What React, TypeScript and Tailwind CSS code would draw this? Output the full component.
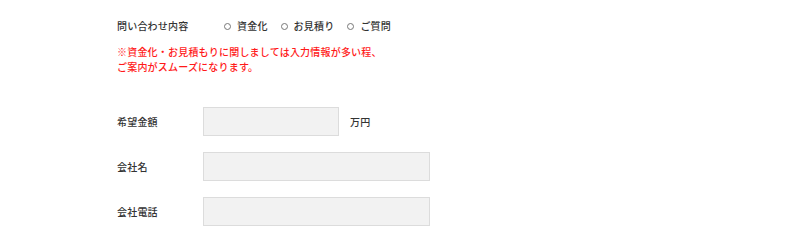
const font = { fontFamily: '"Noto Sans CJK JP", "Noto Sans", sans-serif' }

const inquiryTypes = ['資金化', 'お見積り', 'ご質問']

function Radio({ label }: { label: string }) {
  return (
    <label className="flex items-center gap-[6px]">
      <span className="block h-[7px] w-[7px] rounded-full border border-[#777] bg-white" />
      <span>{label}</span>
    </label>
  )
}

function Field({ label, width, suffix }: { label: string; width: string; suffix?: string }) {
  return (
    <div className="flex items-center">
      <div className="w-[86px]">{label}</div>
      <div className={`h-[29px] border border-[#dcdcdc] bg-[#f2f2f2] ${width}`} />
      {suffix && <span className="ml-[11px]">{suffix}</span>}
    </div>
  )
}

export default function App() {
  return (
    <div
      className="h-[243px] w-[800px] bg-white pl-[117px] text-[10px] font-medium tracking-[0.02em] text-[#333]"
      style={font}
    >
      <div className="flex items-center pt-[18px] leading-[16px]">
        <div className="w-[107px]">問い合わせ内容</div>
        <div className="flex items-center gap-[13px]">
          {inquiryTypes.map((t) => (
            <Radio key={t} label={t} />
          ))}
        </div>
      </div>

      <p className="mt-[10px] leading-[15px] text-[#ff1a1a]">
        ※資金化・お見積もりに関しましては入力情報が多い程、
        <br />
        ご案内がスムーズになります。
      </p>

      <div className="mt-[33px] flex flex-col gap-[16px]">
        <Field label="希望金額" width="w-[136px]" suffix="万円" />
        <Field label="会社名" width="w-[227px]" />
        <Field label="会社電話" width="w-[227px]" />
      </div>
    </div>
  )
}
